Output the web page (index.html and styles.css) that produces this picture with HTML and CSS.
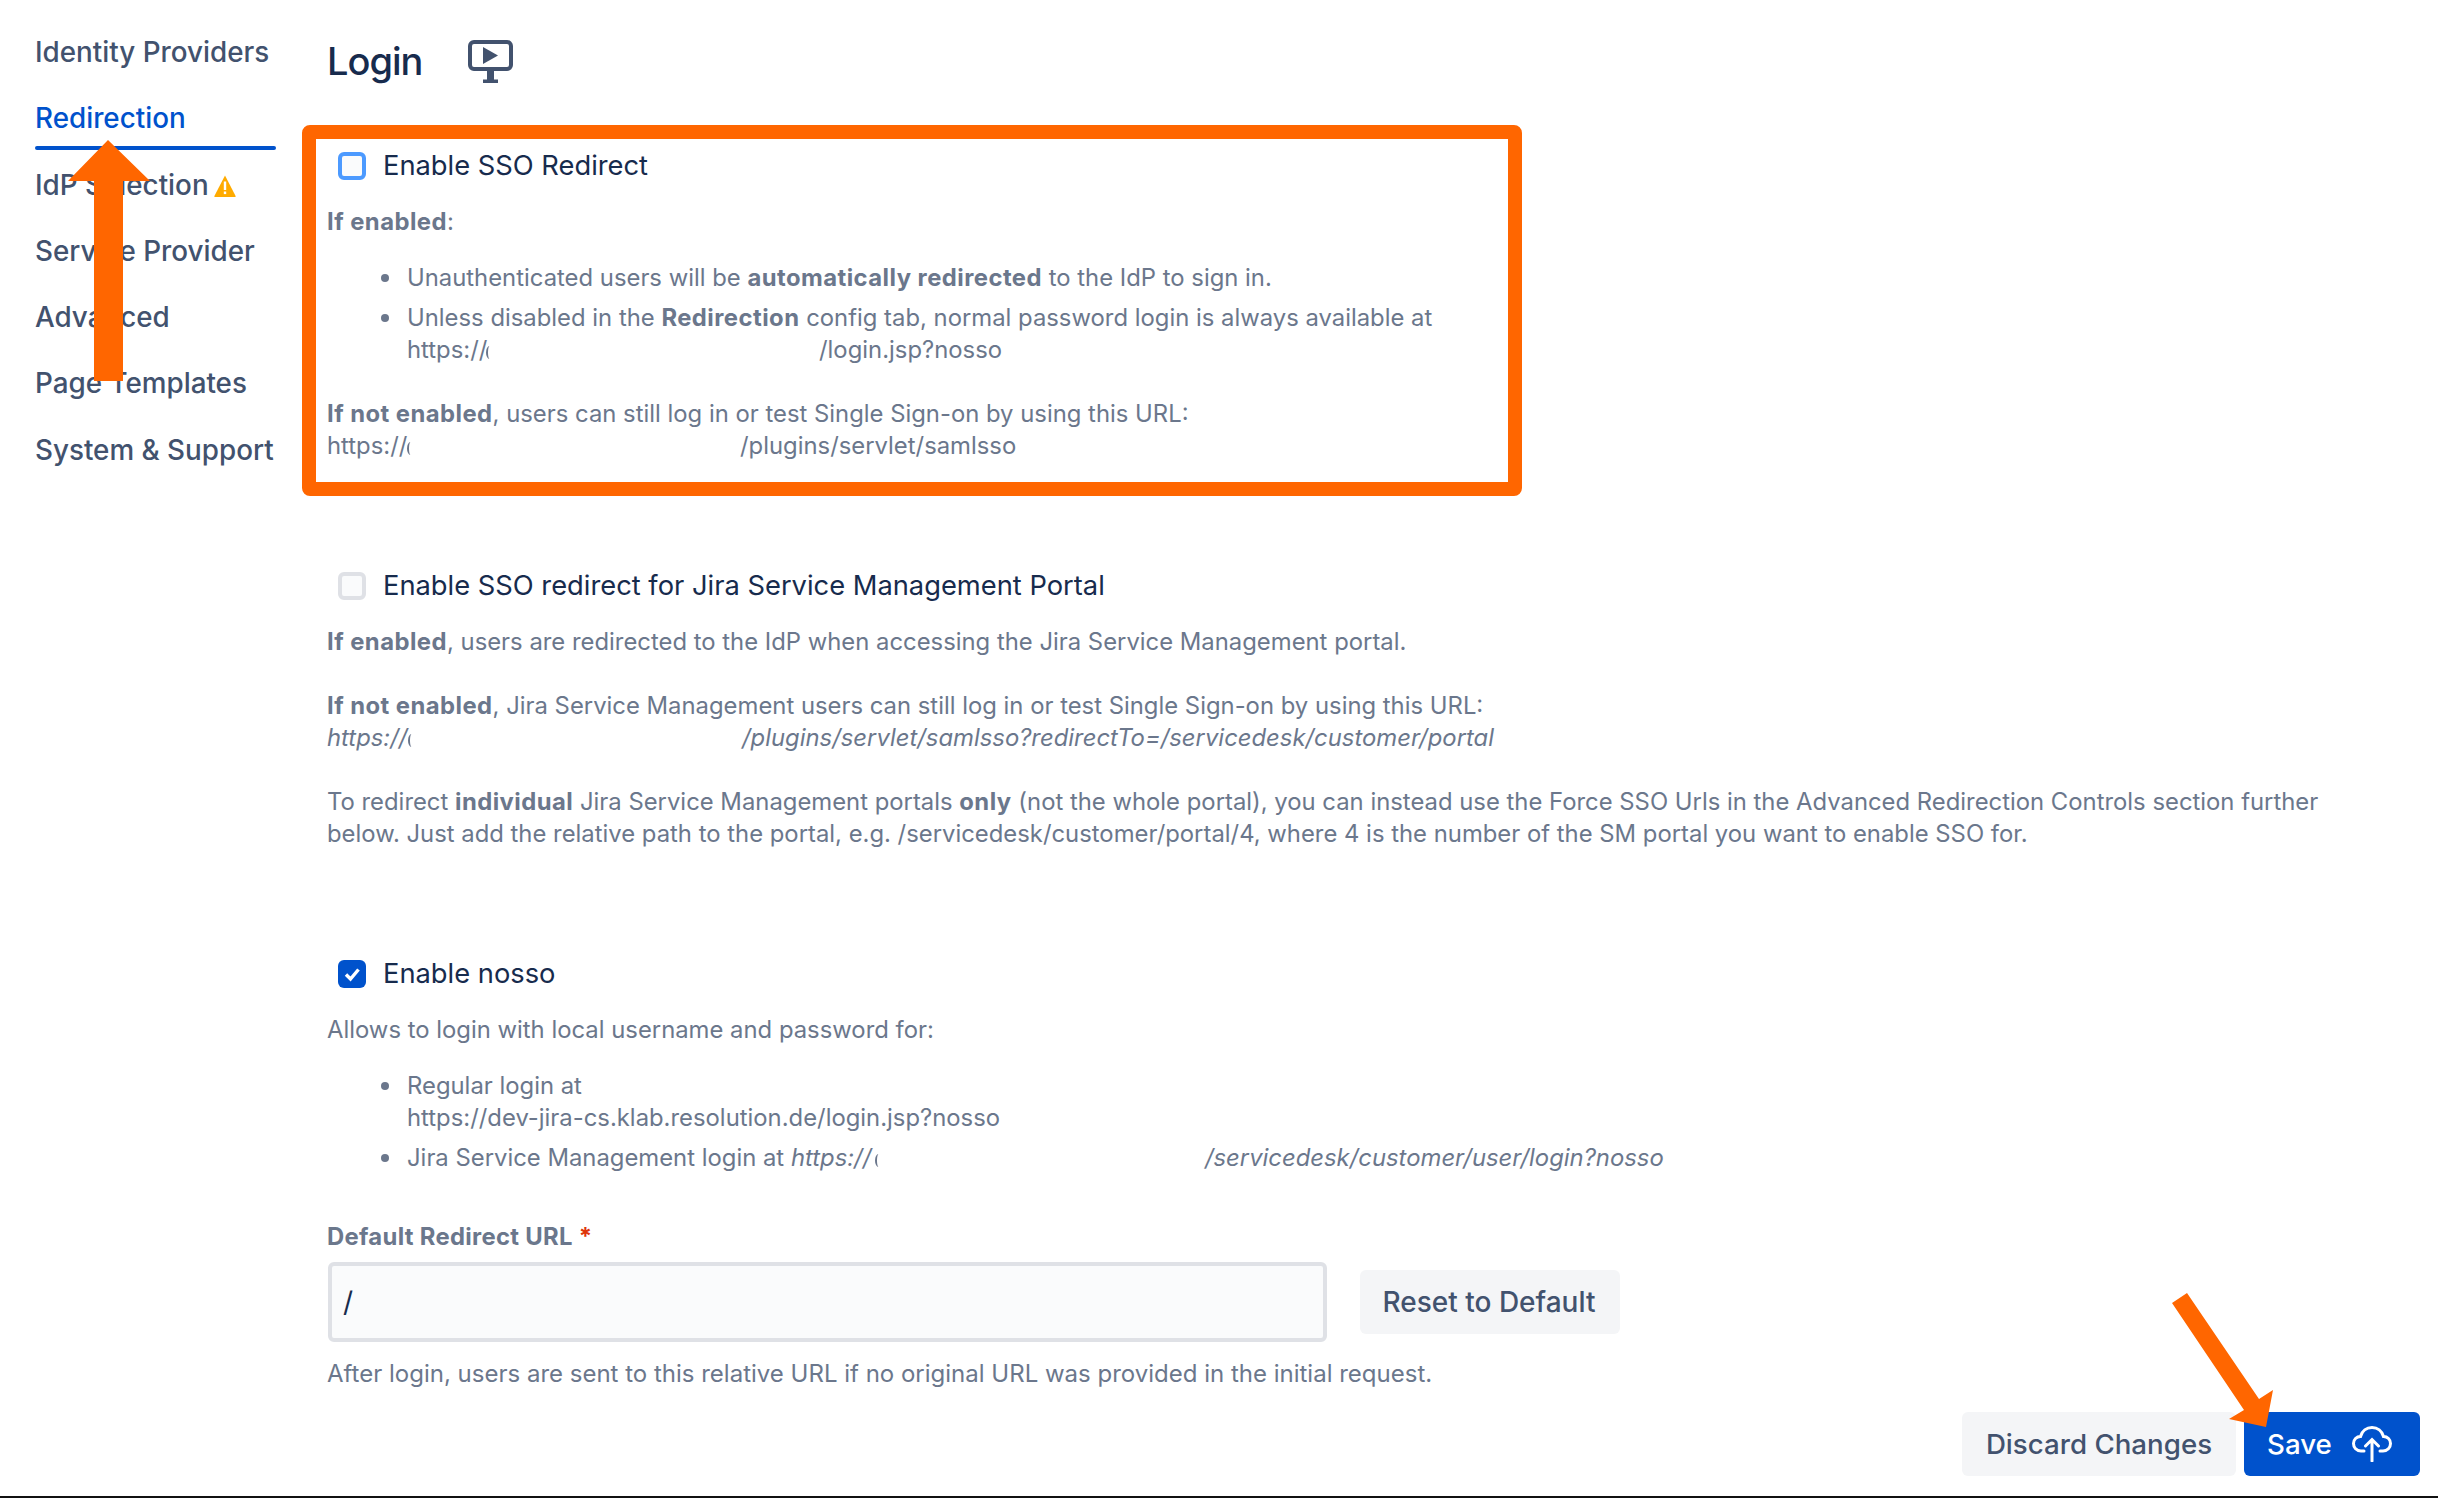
FILE: index.html
```html
<!DOCTYPE html>
<html>
<head lang="en">
    <meta charset="UTF-8">
    <title>Login</title>
    <link rel="stylesheet" href="styles.css">
</head>
<body>
    <div id="page">
        <ul id="nav">
            <li>Identity Providers</li>
            <li class="selected">Redirection</li>
            <li>IdP Selection<svg class="warn" viewBox="0 0 22 22"><path d="M11 0.5 L21.6 21 Q22 22 21 22 L1 22 Q0 22 0.4 21 Z" fill="#ffab00"/><rect x="9.8" y="6.5" width="2.4" height="8.5" fill="#fff"/><rect x="9.8" y="16.5" width="2.4" height="2.6" fill="#fff"/></svg></li>
            <li>Service Provider</li>
            <li>Advanced</li>
            <li>Page Templates</li>
            <li>System &amp; Support</li>
        </ul>
        <div id="main">
            <div class="title">
                <h1>Login</h1>
                <svg class="video" viewBox="0 0 45 43">
                    <rect x="2" y="2" width="41" height="27" rx="4" fill="#fff" stroke="#42526e" stroke-width="4"/>
                    <path d="M15 7 L30 15.5 L15 24 Z" fill="#42526e"/>
                    <rect x="19" y="31" width="7" height="9" fill="#42526e"/>
                    <rect x="15" y="39.5" width="15" height="3.5" fill="#42526e"/>
                </svg>
            </div>

            <div class="marked">
                <label class="check"><span class="box focus"></span>Enable SSO Redirect</label>
                <p class="after-check"><b>If enabled</b>:</p>
                <ul class="list">
                    <li>Unauthenticated users will be <b>automatically redirected</b> to the IdP to sign in.</li>
                    <li>Unless disabled in the <b>Redirection</b> config tab, normal password login is always available at<br><span class="hide hide-a">https://</span>/login.jsp?nosso</li>
                </ul>
                <p class="gap"><b>If not enabled</b>, users can still log in or test Single Sign-on by using this URL:<br><span class="hide hide-b">https://</span>/plugins/servlet/samlsso</p>
            </div>

            <div class="sec sec-portal">
                <label class="check"><span class="box"></span>Enable SSO redirect for Jira Service Management Portal</label>
                <p class="after-check"><b>If enabled</b>, users are redirected to the IdP when accessing the Jira Service Management portal.</p>
                <p class="gap"><b>If not enabled</b>, Jira Service Management users can still log in or test Single Sign-on by using this URL:<br><i><span class="hide hide-c">https://</span>/plugins/servlet/samlsso?redirectTo=/servicedesk/customer/portal</i></p>
                <p class="gap">To redirect <b>individual</b> Jira Service Management portals <b>only</b> (not the whole portal), you can instead use the Force SSO Urls in the Advanced Redirection Controls section further<br>below. Just add the relative path to the portal, e.g. /servicedesk/customer/portal/4, where 4 is the number of the SM portal you want to enable SSO for.</p>
            </div>

            <div class="sec sec-nosso">
                <label class="check"><span class="box on"><svg viewBox="0 0 28 28"><path d="M8 14.5 L12.5 19 L20.5 9.5" fill="none" stroke="#fff" stroke-width="3.4"/></svg></span>Enable nosso</label>
                <p class="after-check">Allows to login with local username and password for:</p>
                <ul class="list">
                    <li>Regular login at<br>https://dev-jira-cs.klab.resolution.de/login.jsp?nosso</li>
                    <li>Jira Service Management login at <i><span class="hide hide-d">https://</span>/servicedesk/customer/user/login?nosso</i></li>
                </ul>
                <div class="field-label">Default Redirect URL <span class="req">*</span></div>
                <div class="field">
                    <div class="input">/</div>
                    <button class="btn btn-reset">Reset to Default</button>
                </div>
                <p class="help">After login, users are sent to this relative URL if no original URL was provided in the initial request.</p>
            </div>

            <div class="actions">
                <button class="btn btn-discard">Discard Changes</button>
                <button class="btn btn-save">Save<svg class="cloud" viewBox="0 0 40 36"><path d="M12 25 H9 C4.5 25 1.5 21.5 1.5 17.5 C1.5 13.5 4.5 10.5 8.5 10.5 C10 5 14.5 1.5 20 1.5 C25.5 1.5 30 5 31.5 10.5 C35.5 10.5 38.5 13.5 38.5 17.5 C38.5 21.5 35.5 25 31 25 H28" fill="none" stroke="#fff" stroke-width="3" stroke-linecap="round"/><path d="M20 35 V14 M13.5 20 L20 13.5 L26.5 20" fill="none" stroke="#fff" stroke-width="3" stroke-linecap="round"/></svg></button>
            </div>
        </div>
    </div>

    <!-- annotation arrows drawn over the page -->
    <svg id="arrows" viewBox="0 0 2438 1498">
        <path d="M108 140 L150 181 L123 181 L123 381 L94 381 L94 181 L68 181 Z"/>
        <path d="M2172 1303 L2187 1293 L2259 1399 L2273 1390 L2266 1427 L2229 1419 L2244 1410 Z"/>
    </svg>
</body>
</html>
```
FILE: styles.css
```css
*{
    margin: 0;
    padding: 0;
    box-sizing: border-box;
}
ul,ol{
    list-style: none;
}
html,body{
    height: 1498px;
    overflow: hidden;
}
body{
    background: #fff;
    border-bottom: 2px solid #111;
    font-family: Inter, "Liberation Sans", sans-serif;
    font-size: 23.85px;
    line-height: 32px;
    color: #6b778c;
    position: relative;
}
#page{
    display: flex;
}
#nav{
    width: 241px;
    margin-left: 35px;
    margin-right: 26px;
    padding-top: 19px;
    flex: none;
}
#nav li{
    height: 66.3px;
    line-height: 66px;
    font-size: 27.8px;
    font-weight: 500;
    color: #42526e;
    white-space: nowrap;
    position: relative;
}
#nav .selected{
    color: #0052cc;
}
#nav .selected:after{
    content: "";
    position: absolute;
    left: 0;
    right: 0;
    bottom: 2px;
    height: 4px;
    border-radius: 2px;
    background: #0052cc;
}
.warn{
    width: 22px;
    height: 22px;
    margin-left: 5px;
    vertical-align: -2px;
}
#main{
    flex: 1;
    min-width: 0;
}
.title{
    display: flex;
    align-items: center;
    height: 125px;
    padding-left: 25px;
    padding-bottom: 3px;
}
.title h1{
    font-size: 38px;
    line-height: 48px;
    font-weight: 500;
    letter-spacing: -1px;
    color: #172b4d;
    width: 141px;
}
.video{
    width: 45px;
    height: 43px;
}
.marked{
    width: 1220px;
    height: 371px;
    border: 14px solid #ff6600;
    border-radius: 8px;
    padding: 13px 0 0 11px;
}
.check{
    display: flex;
    align-items: center;
    height: 28px;
    font-size: 27.3px;
    color: #172b4d;
}
.box{
    width: 28px;
    height: 28px;
    margin-left: 11px;
    margin-right: 17px;
    border: 4px solid #dfe1e6;
    border-radius: 6px;
    background: #fafbfc;
    flex: none;
}
.box.focus{
    border-color: #4c9aff;
}
.box.on{
    border: 0;
    background: #0052cc;
}
.box svg{
    display: block;
    width: 28px;
    height: 28px;
}
.after-check{
    margin-top: 26px;
}
.gap{
    margin-top: 32px;
}
.list{
    margin-top: 24px;
    padding-left: 80px;
}
.list li{
    position: relative;
}
.list li:before{
    content: "";
    position: absolute;
    left: -26px;
    top: 12px;
    width: 8px;
    height: 8px;
    border-radius: 50%;
    background: #6b778c;
}
.list li + li{
    margin-top: 8px;
}
b{
    font-weight: 700;
    letter-spacing: .45px;
}
.hide{
    display: inline-block;
    height: 32px;
    vertical-align: top;
    position: relative;
}
/* sliver of the first letter left by the redaction */
.hide:after{
    content: "";
    position: absolute;
    top: 12px;
    width: 5px;
    height: 13px;
    border-left: 2px solid #6b778c;
    border-radius: 50%;
}
.hide-a{
    width: 83px;
    margin-right: 329px;
}
.hide-a:after{
    left: 79px;
}
.hide-b{
    width: 84px;
    margin-right: 329px;
}
.hide-b:after{
    left: 80px;
}
.hide-c{
    width: 85px;
    margin-right: 330px;
}
.hide-c:after{
    left: 81px;
}
.hide-d{
    width: 89px;
    margin-right: 325px;
}
.hide-d:after{
    left: 84px;
}
.sec{
    padding-left: 25px;
    white-space: nowrap;
}
.sec-portal{
    margin-top: 76px;
}
.sec-nosso{
    margin-top: 110px;
}
.field-label{
    margin-top: 47px;
    font-weight: 700;
    letter-spacing: .3px;
}
.req{
    color: #de350b;
}
.field{
    display: flex;
    align-items: center;
    margin-top: 9px;
    padding-left: 1px;
}
.input{
    width: 999px;
    height: 80px;
    border: 4px solid #dfe1e6;
    border-radius: 6px;
    background: #fafbfc;
    padding-left: 11px;
    font-size: 28px;
    line-height: 72px;
    color: #172b4d;
}
.btn{
    height: 64px;
    border: 0;
    border-radius: 6px;
    font-family: Inter, "Liberation Sans", sans-serif;
    font-size: 27.7px;
    font-weight: 500;
    background: #f4f5f7;
    color: #42526e;
}
.btn-reset{
    width: 260px;
    margin-left: 33px;
    padding-right: 2px;
    font-size: 28px;
}
.help{
    margin-top: 16px;
    font-size: 24px;
}
.actions{
    display: flex;
    justify-content: flex-end;
    gap: 8px;
    margin-top: 22px;
    padding-right: 18px;
}
.btn-discard{
    width: 274px;
}
.btn-save{
    width: 176px;
    padding-left: 23px;
    display: flex;
    align-items: center;
    background: #0052cc;
    color: #fff;
}
.cloud{
    width: 40px;
    height: 36px;
    margin-left: 20px;
}
#arrows{
    position: absolute;
    left: 0;
    top: 0;
    width: 2438px;
    height: 1498px;
    fill: #ff6600;
}
```
